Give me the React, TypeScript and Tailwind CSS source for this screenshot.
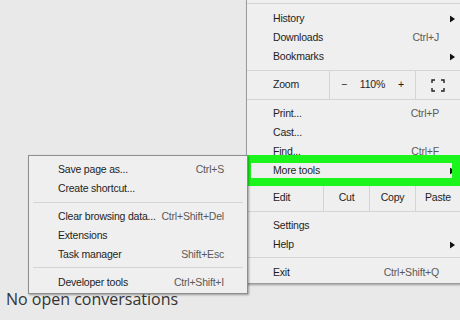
import React from "react";

const Arrow = () => (
  <svg width="5" height="7" viewBox="0 0 5 7" className="absolute right-[5px] top-1/2 -translate-y-1/2">
    <path d="M0 0 L5 3.5 L0 7 Z" fill="#111" />
  </svg>
);

function Row({ label, sc, arrow, h = 19 }: { label: string; sc?: string; arrow?: boolean; h?: number }) {
  return (
    <div className="relative flex items-center whitespace-nowrap pl-[26px] pr-[21px]" style={{ height: h }}>
      <span className="flex-1 text-[#1e1e1e]">{label}</span>
      {sc && <span className="text-[#5a5a5a]">{sc}</span>}
      {arrow && <Arrow />}
    </div>
  );
}

function SubRow({ label, sc }: { label: string; sc?: string }) {
  return (
    <div className="flex h-[19px] items-center whitespace-nowrap pl-[29px] pr-[23px]">
      <span className="flex-1 text-[#1e1e1e]">{label}</span>
      {sc && <span className="text-[#5a5a5a]">{sc}</span>}
    </div>
  );
}

const Sep = () => <div className="h-px bg-[#d4d4d4]" />;

export default function App() {
  return (
    <div className="relative h-[320px] w-[460px] overflow-hidden bg-[#e9e9e9]" style={{ fontFamily: '"Liberation Sans", Arial, sans-serif' }}>
      <div className="pl-[6px] pt-[288px] text-[16px] leading-[22px] text-[#333]" style={{ fontFamily: '"Open Sans", "Noto Sans", sans-serif' }}>
        No open conversations
      </div>

      {/* main menu */}
      <div className="absolute left-[246px] top-0 flex w-[214px] flex-col border-b border-l border-[#9c9c9c] bg-[#efefef] text-[10.5px] tracking-[-0.2px] shadow-[1px_1px_2px_rgba(0,0,0,0.35)]">
        <div className="h-[3px]" />
        <Sep />
        <div className="h-[5px]" />
        <Row label="History" arrow />
        <Row label="Downloads" sc="Ctrl+J" />
        <Row label="Bookmarks" arrow />
        <div className="h-[4px]" />
        <Sep />
        <div className="flex h-[28px] items-center">
          <div className="w-[82px] pl-[26px] text-[#1e1e1e]">Zoom</div>
          <div className="flex h-full w-[87px] items-center border-l border-r border-[#d4d4d4] text-[#1e1e1e]">
            <span className="w-[28px] text-center">−</span>
            <span className="flex-1 text-center">110%</span>
            <span className="w-[28px] text-center">+</span>
          </div>
          <div className="flex flex-1 items-center justify-center">
            <svg width="14" height="13" viewBox="0 0 14 13" fill="none" stroke="#222" strokeWidth="1.4">
              <path d="M1 4V1h3M10 1h3v3M13 9v3h-3M4 12H1V9" />
            </svg>
          </div>
        </div>
        <Sep />
        <div className="h-[4px]" />
        <Row label="Print..." sc="Ctrl+P" />
        <Row label="Cast..." />
        <Row label="Find..." sc="Ctrl+F" />
        <Row label="More tools" arrow />
        <div className="h-[3px]" />
        <Sep />
        <div className="flex h-[27px] items-center text-[#1e1e1e]">
          <div className="w-[76px] pl-[26px]">Edit</div>
          <div className="flex h-full w-[46px] items-center justify-center border-l border-[#d4d4d4]">Cut</div>
          <div className="flex h-full w-[46px] items-center justify-center border-l border-[#d4d4d4]">Copy</div>
          <div className="flex h-full flex-1 items-center justify-center border-l border-[#d4d4d4]">Paste</div>
        </div>
        <Sep />
        <div className="h-[4px]" />
        <Row label="Settings" />
        <Row label="Help" arrow />
        <div className="h-[3px]" />
        <Sep />
        <div className="h-[5px]" />
        <Row label="Exit" sc="Ctrl+Shift+Q" />
        <div className="h-[1px]" />
      </div>

      {/* green highlight */}
      <div className="absolute left-[243px] top-[155px] h-[31px] w-[217px] border-[8px] border-[#1cf51c]" />

      {/* submenu */}
      <div className="absolute left-[28px] top-[155px] flex w-[220px] flex-col border border-[#8e8e8e] bg-[#efefef] text-[10.5px] tracking-[-0.2px] shadow-[1px_1px_2px_rgba(0,0,0,0.35)]">
        <div className="h-[4px]" />
        <SubRow label="Save page as..." sc="Ctrl+S" />
        <SubRow label="Create shortcut..." />
        <div className="h-[4px]" />
        <div className="mx-[4px] h-px bg-[#d4d4d4]" />
        <div className="h-[4px]" />
        <SubRow label="Clear browsing data..." sc="Ctrl+Shift+Del" />
        <SubRow label="Extensions" />
        <SubRow label="Task manager" sc="Shift+Esc" />
        <div className="h-[3px]" />
        <div className="mx-[4px] h-px bg-[#d4d4d4]" />
        <div className="h-[5px]" />
        <SubRow label="Developer tools" sc="Ctrl+Shift+I" />
        <div className="h-[1px]" />
      </div>
    </div>
  );
}
